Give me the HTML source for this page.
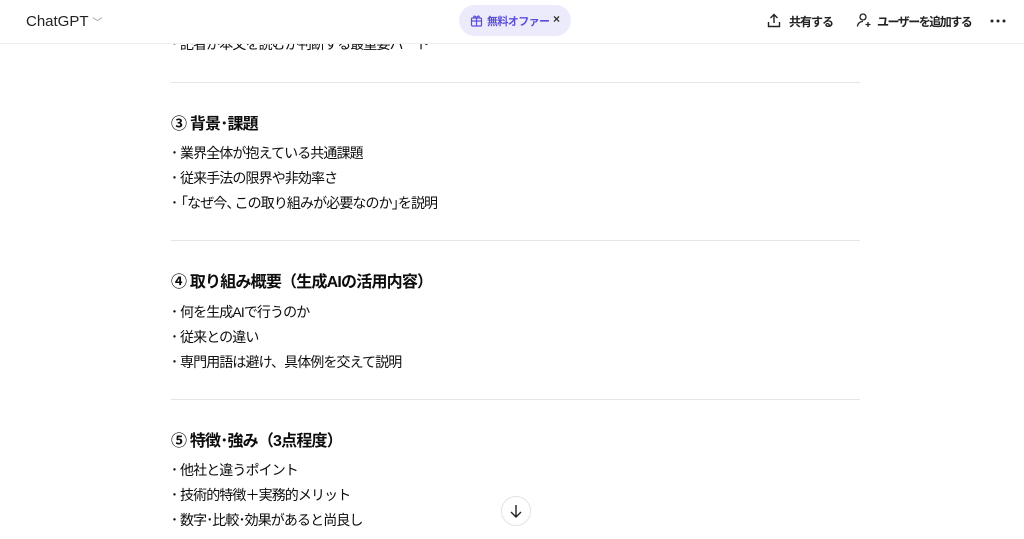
<!DOCTYPE html>
<html><head><meta charset="utf-8"><style>
body{margin:0;width:1024px;height:539px;overflow:hidden;background:#fff;font-family:"Liberation Sans","Noto Sans CJK JP",sans-serif;color:#0d0d0d;position:relative}
.hdr{position:absolute;left:0;top:0;width:1024px;height:43px;background:#fff;border-bottom:1px solid #efefef;z-index:2}
.abs{position:absolute;white-space:nowrap}
.c{position:absolute;left:171px;font-size:14px;white-space:nowrap;letter-spacing:-0.9px}
.c b{display:inline-block;width:9px;font-weight:normal;letter-spacing:0}
.h{position:absolute;left:171px;font-size:16px;font-weight:bold;white-space:nowrap;letter-spacing:-0.8px}
.hr{position:absolute;left:171px;width:689px;height:1px;background:#e5e5e5}
</style></head><body>
<div class="c" style="top:34px"><b>･</b>記者が本文を読むか判断する最重要パート</div>
<div class="hdr">
<div class="abs" style="left:26px;top:13px;font-size:15px;color:#222">ChatGPT <span style="font-size:10px;color:#888">﹀</span></div>
<div class="abs" style="left:459px;top:5px;width:112px;height:31px;border-radius:16px;background:#ecebfc"></div>
<svg class="abs" style="left:470px;top:14px" width="13" height="13" viewBox="0 0 13 13" fill="none" stroke="#5b4fd8" stroke-width="1.2"><rect x="1.5" y="4" width="10" height="8" rx="1"/><path d="M1.5 7h10M6.5 4v8M6.5 4C5 1 3 2 4 4M6.5 4C8 1 10 2 9 4"/></svg>
<div class="abs" style="left:487px;top:13px;font-size:11px;color:#5b4fd8;font-weight:bold;letter-spacing:-0.6px">無料オファー</div>
<div class="abs" style="left:553px;top:12px;font-size:12px;color:#333;font-weight:bold">×</div>
<svg class="abs" style="left:767px;top:13px" width="14" height="15" viewBox="0 0 14 15" fill="none" stroke="#222" stroke-width="1.4"><path d="M7 10V2M3.5 5L7 1.5 10.5 5M1.5 9v4.5h11V9"/></svg>
<div class="abs" style="left:789px;top:13px;font-size:12px;font-weight:bold;color:#222;letter-spacing:-1px">共有する</div>
<svg class="abs" style="left:856px;top:12px" width="16" height="16" viewBox="0 0 16 16" fill="none" stroke="#222" stroke-width="1.3"><circle cx="7" cy="5" r="3"/><path d="M1.5 14.5c0-3 2.5-5 5.5-5M12 10v5M9.5 12.5h5"/></svg>
<div class="abs" style="left:877px;top:13px;font-size:12px;font-weight:bold;color:#222;letter-spacing:-1.5px">ユーザーを追加する</div>
<svg class="abs" style="left:990px;top:19px" width="16" height="4" viewBox="0 0 16 4" fill="#222"><circle cx="2" cy="2" r="1.5"/><circle cx="8" cy="2" r="1.5"/><circle cx="14" cy="2" r="1.5"/></svg>
</div>
<div class="hr" style="top:82px"></div>
<div class="h" style="top:110px">③ 背景･課題</div>
<div class="c" style="top:143px"><b>･</b>業界全体が抱えている共通課題</div>
<div class="c" style="top:168px"><b>･</b>従来手法の限界や非効率さ</div>
<div class="c" style="top:193px"><b>･</b><span style="margin-left:-6px">「</span>なぜ今<span style="margin-right:-5px">、</span>この取り組みが必要なのか<span style="margin-right:-7px">」</span>を説明</div>
<div class="hr" style="top:240px"></div>
<div class="h" style="top:268px">④ 取り組み概要（生成AIの活用内容）</div>
<div class="c" style="top:302px"><b>･</b>何を生成AIで行うのか</div>
<div class="c" style="top:327px"><b>･</b>従来との違い</div>
<div class="c" style="top:352px"><b>･</b>専門用語は避け、具体例を交えて説明</div>
<div class="hr" style="top:399px"></div>
<div class="h" style="top:427px">⑤ 特徴･強み（3点程度）</div>
<div class="c" style="top:460px"><b>･</b>他社と違うポイント</div>
<div class="c" style="top:485px"><b>･</b>技術的特徴＋実務的メリット</div>
<div class="c" style="top:510px"><b>･</b>数字･比較･効果があると尚良し</div>
<div class="abs" style="left:501px;top:496px;width:28px;height:28px;border:1px solid #e3e3e3;border-radius:50%;background:#fff"></div>
<svg class="abs" style="left:508px;top:503px" width="16" height="16" viewBox="0 0 16 16" fill="none" stroke="#222" stroke-width="1.4"><path d="M8 2v12M3 9l5 5 5-5"/></svg>
</body></html>
